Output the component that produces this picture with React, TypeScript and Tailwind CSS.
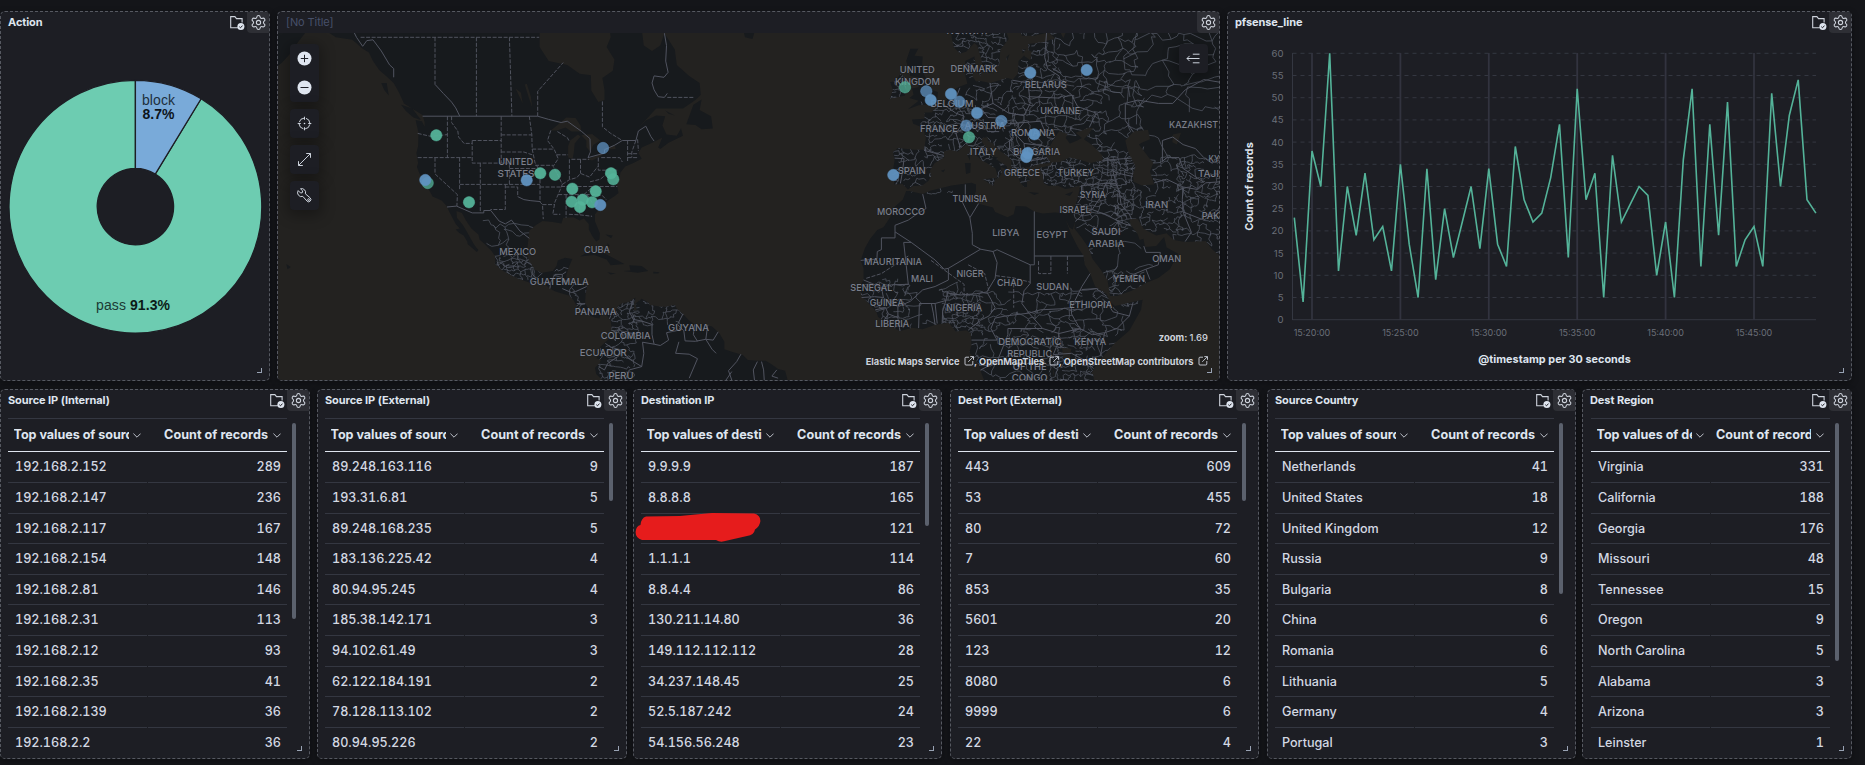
import { Settings } from "lucide-react";
import type { ReactNode } from "react";

/* ---------- shared panel chrome ---------- */

function FolderCheck() {
  return (
    <svg width="16" height="16" viewBox="0 0 16 16" fill="none" className="block">
      <path d="M9 12.8H1.7V1.6h4.2l1.6 2h5.6v3.8" stroke="#ced3dc" strokeWidth="1.1" />
      <circle cx="11.9" cy="11.6" r="3.5" fill="#dfe5ef" />
      <path d="M10.3 11.7l1.2 1.1 2-2.2" stroke="#1d1e24" strokeWidth="1" />
    </svg>
  );
}

function Panel({
  title,
  width,
  muted = false,
  folder = true,
  children,
}: {
  title: string;
  width: string;
  muted?: boolean;
  folder?: boolean;
  children: ReactNode;
}) {
  return (
    <section
      className={`relative flex h-[370px] shrink-0 flex-col rounded-[5px] border border-dashed border-[#565961] bg-[#1d1e24] shadow-[0_2px_6px_rgba(0,0,0,0.35)] ${width}`}
    >
      <header className="flex h-[21px] shrink-0 items-center justify-between">
        <h2
          className={
            muted
              ? "pl-2 text-[11px] leading-[21px] tracking-[-0.1px] text-[#47506a]"
              : "pl-[7px] text-[11px] leading-[21px] font-bold tracking-[-0.08px] text-[#dfe5ef]"
          }
        >
          {title}
        </h2>
        <div className="flex h-full items-center gap-[2.5px]">
          {folder && <FolderCheck />}
          <span className="flex h-[21px] w-[22px] items-center justify-center rounded-bl-[4px] rounded-tr-[4px] bg-[#2e2f35]">
            <Settings size={17} strokeWidth={1.5} color="#ced3dc" />
          </span>
        </div>
      </header>
      {children}
      <span className="absolute right-[7px] bottom-[7px] h-[5px] w-[5px] border-r-[1.5px] border-b-[1.5px] border-[#98a2b3]" />
    </section>
  );
}

/* ---------- donut ---------- */

const TAU = Math.PI * 2;

function slice(cx: number, cy: number, r0: number, r1: number, a0: number, a1: number) {
  const p = (r: number, a: number) =>
    `${(cx + r * Math.sin(a * TAU)).toFixed(2)} ${(cy - r * Math.cos(a * TAU)).toFixed(2)}`;
  const big = a1 - a0 > 0.5 ? 1 : 0;
  return `M${p(r0, a0)}L${p(r1, a0)}A${r1} ${r1} 0 ${big} 1 ${p(r1, a1)}L${p(r0, a1)}A${r0} ${r0} 0 ${big} 0 ${p(r0, a0)}Z`;
}

function Donut() {
  return (
    <svg viewBox="1 33 268 347" className="block h-[347px] w-[268px]" fontFamily='"Liberation Sans", Arial, sans-serif' fontSize="14">
      <path d={slice(135.4, 206.7, 38.2, 126.4, 0.087, 1)} fill="#6dccb1" stroke="#1d1e24" strokeWidth="1.3" />
      <path d={slice(135.4, 206.7, 38.2, 126.4, 0, 0.087)} fill="#79aad9" stroke="#1d1e24" strokeWidth="1.3" />
      <text x="158.5" y="105" textAnchor="middle" textLength="33" fill="#1d2f3c">block</text>
      <text x="158.5" y="119.3" textAnchor="middle" textLength="32" fontWeight="700" fill="#0d141b">8.7%</text>
      <text x="96" y="310" textLength="30" fill="#1b3a34">pass</text>
      <text x="130" y="310" textLength="40" fontWeight="700" fill="#0c1b18">91.3%</text>
    </svg>
  );
}

/* ---------- line chart ---------- */

const COUNTS = [
  23, 4, 38, 30, 60, 11, 30, 19, 33, 18, 21, 11, 35, 17, 5, 34, 9, 25, 14, 22, 30, 16, 34, 17, 12, 39, 27, 22, 24, 32,
  44, 14, 52, 27, 33, 5, 37, 22, 26, 30, 28, 10, 22, 5, 36, 52, 12, 44, 19, 49, 12, 18, 21, 12, 51, 30, 46, 54, 27, 24,
];
const TIMES = ["15:20:00", "15:25:00", "15:30:00", "15:35:00", "15:40:00", "15:45:00"];
const vy = (v: number) => 319.7 - v * 4.44;

function LineChart() {
  return (
    <svg viewBox="1228 33 623 347" className="block h-[347px] w-[623px]" fontFamily="Inter, sans-serif">
      {Array.from({ length: 13 }, (_, i) => i * 5).map((v) => (
        <g key={v}>
          <line x1="1292.5" x2="1816" y1={vy(v)} y2={vy(v)} stroke="#343741" strokeWidth="1" strokeDasharray={v ? "4 4" : undefined} />
          <text x="1283.5" y={vy(v) + 3.4} textAnchor="end" fontSize="9.6" fill="#6a6e78">{v}</text>
        </g>
      ))}
      <line x1="1292.5" x2="1292.5" y1="53" y2="320" stroke="#343741" />
      {TIMES.map((t, i) => (
        <g key={t}>
          <line x1={1312 + i * 88.4} x2={1312 + i * 88.4} y1="53" y2="320" stroke="#32333f" strokeWidth="1.8" />
          <text x={1312 + i * 88.4} y="336" textAnchor="middle" textLength="36.5" fontSize="9" fill="#6a6e78">{t}</text>
        </g>
      ))}
      <polyline
        points={COUNTS.map((v, i) => `${(1294.3 + i * 8.84).toFixed(1)},${vy(v).toFixed(1)}`).join(" ")}
        fill="none"
        stroke="#54b399"
        strokeWidth="1.6"
      />
      <text transform="translate(1253.3 186.5) rotate(-90)" textAnchor="middle" textLength="88.5" fontSize="10.8" fontWeight="700" fill="#dfe5ef">Count of records</text>
      <text x="1554.5" y="363" textAnchor="middle" textLength="152.5" fontSize="10.8" fontWeight="700" fill="#dfe5ef">@timestamp per 30 seconds</text>
    </svg>
  );
}

/* ---------- map ---------- */

type Pt = [number, number];

// Web Mercator at the current zoom level
const px = (lon: number) => 931 + lon * 4.133;
const py = (lat: number) => 349.2 - 236.8 * Math.log(Math.tan(Math.PI / 4 + (lat * Math.PI) / 360));

function geo(list: string, close = false) {
  return (
    list
      .trim()
      .split(/\s+/)
      .map((s, i) => {
        const [lon, lat] = s.split(",").map(Number);
        return `${i ? "L" : "M"}${px(lon).toFixed(1)} ${py(lat).toFixed(1)}`;
      })
      .join("") + (close ? "Z" : "")
  );
}

const LAND = [
  // the Americas
  `-147,62 -147,61 -144,60 -140,59.7 -137.5,58.6 -136,58.1 -135,57 -133.5,55.8 -131.5,54.8 -130,54 -128.7,52.6 -127.5,51 -125,50 -123,49.2 -122.5,48 -122.5,47.3 -123.2,48.2 -124.7,48.4 -124,46.3 -124.1,44 -124.5,42.8 -124.1,41 -124.4,40.3 -123.7,39 -122.5,37.8 -122.4,37 -121.9,36.6 -120.6,34.6 -119.2,34.1 -118.4,33.8 -117.2,32.7 -116.6,31.6 -115.8,30.3 -115,29 -114,28 -115,27.8 -114.2,27.1 -113.1,26.5 -112.2,25.2 -112.1,24.6 -110.5,23.4 -109.9,22.9 -109.5,23.3 -110.4,24.3 -111.3,25.7 -112.3,27.3 -113.3,28.8 -114.7,30.3 -114.8,31.7 -113.5,31.3 -112.5,29.7 -111.2,28 -109.5,26.7 -109.2,25.6 -107.8,24.5 -106.4,23.2 -105.5,22 -105.4,20.5 -105.6,20.3 -104.3,19.1 -102.2,17.9 -99.8,16.8 -96.5,15.7 -95,16.2 -93.5,15.6 -92.2,14.5 -91,13.9 -89.5,13.4 -87.6,12.9 -86.5,11.8 -85.8,10.5 -85.7,9.9 -84.8,9.8 -83.7,8.7 -82.8,8.2 -81.2,7.6 -80.2,7.4 -80,8.2 -79.5,8.9 -78.4,8.1 -77.5,6.8 -77.3,5.5 -77.4,4 -77.8,2.6 -79,1.5 -80,0.6 -80.4,-0.3 -80.9,-2.2 -79.9,-2.6 -80.2,-3.4 -81.3,-4.5 -81,-6 -79.8,-7.2 -79,-9 -34.5,-9 -34.8,-7 -35.3,-5.2 -37,-4.8 -38.5,-3.7 -40,-2.8 -42,-2.8 -44.3,-2.6 -45.5,-1.4 -48,-0.7 -50,0 -50,1.8 -51.3,4 -53,5.5 -55,6 -57.2,6 -58.6,7 -60,8.5 -61.5,9.8 -62,10.7 -64,10.2 -65.5,10.2 -68,10.6 -68.4,11.2 -70,12.1 -71.5,11 -71.2,9.3 -71.9,9.3 -71.8,11.2 -71.5,12.4 -73,11.4 -74.8,11 -75.6,10.5 -76.5,8.8 -77.3,8.6 -79,9.5 -80,9.2 -81.7,9 -83,9.9 -83.7,11 -83.6,13 -83.2,15 -84.5,15.8 -86,15.9 -88,15.7 -88.3,17.5 -87.6,19.5 -86.8,21.3 -88.5,21.6 -90.3,21 -90.6,19.8 -91.5,18.6 -94,18.2 -95.8,18.8 -97.2,20.8 -97.8,22.5 -97.5,25 -97.2,27.6 -95.5,28.8 -94,29.6 -91.5,29.4 -89.4,29.1 -89,30.3 -86.5,30.4 -85,29.7 -84,30.1 -82.8,29 -82.8,27.8 -81.8,26.2 -81,25.2 -80.2,25.7 -80.1,27 -81.3,29.5 -81.3,31 -79.5,32.8 -78,33.9 -76.5,34.7 -75.6,35.3 -76,37 -76.4,38.5 -75.3,38 -75.2,39.2 -74,40.4 -72,41 -70,41.8 -70.8,42.8 -70,43.8 -67.2,44.7 -65,45.5 -66,43.8 -65.5,43.5 -63.5,44.6 -60,45.8 -60.5,47 -61.5,45.8 -64,46 -65,47.5 -64.3,49 -66.5,49.1 -69,48.3 -71,47 -68.5,48.8 -66.5,50.2 -60,50.2 -57,51.5 -55.7,52.3 -56,54 -58.5,55 -61.5,56.5 -62,58.5 -64.5,60.5 -65.5,59 -67.5,58.3 -69.5,59 -70,61 -78,62 -77.5,60 -78.5,58.8 -76.6,57.2 -77,55.7 -79.5,54.7 -79,53 -79,51.5 -80.5,51.2 -82.2,52.9 -82.3,55.1 -85,55.3 -88,56.5 -92.5,57 -94.7,58.8 -94.7,60.5 -94,62`,
  `-160,62 -151.5,62 -151.5,60.5 -153.5,59.2 -155,58 -157,56.8 -160,55.5`,
  `-154.5,57.6 -152.5,58.3 -152.5,57.4 -154,56.8`,
  `-128.2,50.8 -125.5,50.2 -123.4,48.4 -125.2,48.8 -127,49.8`,
  `-133,54 -131.7,54 -131.2,52.2 -132.3,53`,
  `-59.2,47.7 -57.5,50.8 -55.5,51.6 -56,50 -53.2,49 -52.8,47 -55.5,46.9 -57,47.6`,
  `-64.3,49.9 -62,49.1 -63.5,49.4`,
  `-84.9,21.9 -82.5,23.1 -80,23 -77,21.6 -74.2,20.2 -77.5,19.9 -78.5,21.2 -81.5,22.2`,
  `-74.4,18.6 -72.7,18.7 -73,19.9 -70,19.7 -68.4,18.6 -71,18.2`,
  `-78.3,18.3 -76.3,18 -77.5,17.8`,
  `-67.2,18.4 -65.7,18.3 -66,18 -67.2,18`,
  `-78.4,24.9 -77.8,24.3 -78,23.8`,
  `-78.8,26.7 -77,26.5 -77.4,25.9`,
  `-156,20.2 -154.9,19.5 -155.7,19`,
  `-158,21.6 -157.6,21.3 -158.2,21.3`,
  `-46,62 -45,60 -43.2,59.8 -42.6,60.8 -42,62`,
  // Scandinavia
  `4.8,62 5,60 5.5,58.8 7,58 8.5,58.2 10.5,59.3 11.2,59 12,57.5 12.8,55.6 14.2,55.4 16.5,56.5 16.8,58.5 18.8,59.8 17.2,62`,
  // Eurasia and Africa
  `21.3,62 21.3,61 22,60.2 25,60.2 28.5,60.6 30,59.9 27,59.4 23.5,59.2 23.6,58.4 24.4,58.2 24,57.1 22.5,57.7 21.2,57 21,55.3 19.8,54.5 18.5,54.7 14.3,54 12,54.3 10.9,54.2 10,55 10.8,56.4 10.5,57.6 8.3,57 8.1,55.5 8.8,53.9 7,53.5 4.8,52.8 3.8,51.5 1.7,50.9 0.2,49.6 -1.5,49.6 -1.6,48.6 -4.6,48.5 -4.3,47.8 -2,47.2 -1.2,45.5 -1.7,43.4 -4,43.4 -8,43.7 -9.2,43 -8.8,41.5 -9.4,38.8 -8.8,38 -8.9,37 -6.9,37.1 -5.6,36 -4.4,36.7 -2.1,36.8 -0.6,37.7 0.1,38.7 -0.3,39.6 0.9,41 3.2,42 3.1,43.1 4.5,43.4 6.5,43.1 8.5,44.3 10.2,43.7 11,42.4 12.4,41.5 14,40.8 15.6,40 16.1,38.7 15.7,37.9 16.6,38.5 17.1,39.2 16.8,40.4 18.3,39.8 18.4,40.4 16,41.6 16,42 14,42.5 13.5,43.6 12.3,44.8 12.4,45.4 13.7,45.6 13.8,44.9 15,44.5 16,43.5 18.5,42.3 19.5,41.5 19.4,40.4 21,38.8 21.5,37.5 22.5,36.5 23.2,36.5 23.2,37.6 24,37.8 22.8,39.2 22.9,40.3 24,40.2 26,40.8 28.8,41 29,41.2 28,42 27.7,42.8 28.6,43.8 29.7,45.2 31,46.6 33,46.1 32.6,45.4 33.6,44.5 35.4,45 36.5,45.4 35,46.3 38,47.1 39.2,47.1 38,46 37,45.2 39,44.2 41.5,42.4 41.5,41.5 38.5,41 36,41.6 33.5,42 31.3,41.2 29.2,41.1 29,40.6 26.2,40.1 27,39 27.3,37.2 28.5,36.7 30.6,36.8 32.5,36.1 34,36.3 36,36.8 35.8,35.5 35,33 34.3,31.4 32.3,31.2 30,31.4 27,31.2 25,31.6 23,32.6 20.5,32.7 20,31 18.5,30.4 15.5,31.5 15,32.4 11.2,33.2 10.1,34 10.9,35.7 10.9,37 9.8,37.3 5,36.8 0,35.8 -2,35.1 -5.3,35.7 -6,35.7 -6.8,34 -9.5,32 -9.8,30.5 -11.5,28.3 -13,27.7 -14.7,25.8 -16,23.7 -17,21 -16.3,19.2 -16.3,16.5 -17.4,14.7 -16.7,12.5 -14.8,10.8 -13.2,9 -12.8,7.8 -11.3,6.7 -9,5.1 -7.5,4.4 -4.5,5.2 -2,4.8 1,5.9 4.3,6.4 6,4.3 8.5,4.6 9.6,3.9 9.8,1 9.3,-0.8 11.5,-3.5 12.2,-5.8 13.4,-8.8 39.5,-9 39.3,-6 38.8,-6 39.6,-4.3 41.5,-1.9 44.5,1.5 48,4.5 50.8,9.5 51.2,11.9 48.5,11.3 44.5,10.4 43.2,11.5 42.5,13.2 39.7,15 38.5,18 37.2,20 36.9,22 35.5,24 33.8,27 32.6,29.9 33.5,28.2 34.3,27.8 34.9,29.5 34.7,28 36.5,26 38,24 39.1,21.3 41,19 42.7,16.5 43.3,12.8 45,12.8 48.5,14 52,15.8 55,17 57.8,19 59.8,22.5 57,23.9 56.4,26.2 54.5,24.2 51.8,24 51.4,25.8 50.5,25.5 50,26.8 48.3,28.8 48,30 50,30 51.5,27.9 54.5,26.5 57,27 58.8,25.5 61.5,25.1 66.5,25.3 68,23.5 70,22 75,21 75,62`,
  `-5.6,50.1 -3,50.7 1.3,51 1.7,52.7 0.2,53 -1.5,55 -2.2,56 -2,57.6 -4,57.7 -3.1,58.6 -5,58.6 -6,57 -5,55 -3,54.8 -3,53.4 -4.6,53.2 -4.2,52.3 -5.2,51.8 -3,51.4`,
  `-10,51.7 -6.3,52.2 -5.6,54.5 -7.4,55.3 -8.5,54.3 -9.9,54.1 -9.2,53`,
  `12.5,38 15.6,38.2 15.1,36.7`,
  `8.2,41 9.6,41 9.5,39.2 8.5,39`,
  `8.7,42.5 9.4,43 9.4,41.5`,
  `23.6,35.5 26.2,35.3 25,34.9`,
  `32.4,35 34.4,35.6 33.6,34.7`,
  `18.2,57.5 19,57.9 18.4,57`,
  `11.1,55.6 12.5,56 12,54.9`,
  `22,58.5 23,58.5 22.2,58`,
  `2.4,39.6 3.4,39.8 3,39.3`,
].map((s) => geo(s, true)).join("");

const WATER = [
  `-92,46.7 -90,47.8 -88.3,48.8 -86,48.7 -84.8,47.5 -84.6,46.5 -87,46.5 -88.4,47.2 -90.5,46.7`,
  `-87.8,42 -87.8,44 -87.3,45 -85.4,46 -84.8,45.7 -86.2,44.5 -86.4,43 -86.7,41.8`,
  `-84.6,45.9 -82,46.1 -80,45 -81.7,44.2 -82.4,43 -83.4,43.9 -83.4,45`,
  `-83.3,41.7 -79,42.8 -80,42.2 -82,41.5`,
  `-79.7,43.4 -76.5,44.2 -76.3,43.5`,
  `-98.3,53.8 -97.3,51.8 -96.5,50.4 -96.8,52 -97.8,53.9`,
  `-100.5,53.2 -99.2,52.6 -98.8,51 -99.8,52.3`,
  `47,45 49,46.5 52.5,46.8 53,45.2 51,44.6 50.3,44.3 52.7,42 53.8,41 53,39.5 54,37 51,36.8 49,37.5 48.9,39 49.5,40.4 48,42.5 47.5,43.5`,
  `58.5,46 60.5,46.3 59.5,44.3 58.4,44.7`,
  `31.7,0.3 34,0.2 33.5,-2.3 32,-2.2`,
  `31,60.9 33,61 32,59.9`,
  `29.3,-3.5 30,-7 30.8,-8.5 29.6,-6`,
].map((s) => geo(s, true)).join("");

// national boundaries and coast-like province lines
const SOLID = [
  `-123,49 -95.15,49 -92.5,48.5 -89.5,48 -88,48.2 -84.5,46.5 -82.5,45.3 -82.4,43 -83,42 -79,42.8 -79,43.4 -76.5,44.2 -74.7,45 -71.4,45 -70.8,46.6 -69,47.4 -67.8,45.7 -67,44.9`,
  `-141,62 -139,60 -137.5,58.9 -136.5,59.6 -135,59.7 -133,58.3 -131,56.5 -130,56 -130,54.8`,
  `-120,53.8 -118,52.5 -116,51.2 -115,50.3 -114,49`,
  `-117.1,32.5 -114.8,32.7 -111,31.3 -108.2,31.3 -108.2,31.8 -106.5,31.8 -104.5,29.6 -103,29 -101.5,29.8 -99.5,27.5 -97.2,25.9`,
  `-100,34.6 -98.5,34 -97,33.8 -94.5,33.6`,
  `-64.5,60.5 -64,59 -64.2,57 -63.6,55.5 -64.6,54.8 -67,55 -67.5,54 -67,53 -66,52 -64.5,51.9 -63.8,52.5`,
  `-92.2,14.5 -92,16 -91,17.8 -89.2,17.8 -88.3,18.4`, `-89.2,17.8 -89.2,15.9`, `-89.2,14.5 -87,13.6 -86,13.8 -83.3,15`, `-85.7,11 -83.7,10.9`, `-82.9,9.6 -82.9,8.2`, `-77.3,8.6 -77.8,7.3`,
  `-72,12 -73,9 -72,7.2 -70,6.8 -67.5,6 -67.5,3.5 -67,1.2 -69.8,1.7 -69.5,-1 -70,-4.2 -72.8,-2.5 -75.3,-0.1 -77.5,0.5 -78.8,1.4`,
  `-75.3,-0.1 -75.5,-1.6 -78.2,-3.4 -79,-5 -80.4,-4.2`, `-67,1.2 -65.5,0.9 -63.5,2.2 -64,4 -61,4.6 -60.7,5.3 -61.3,6 -60,8.5`, `-60.7,5.3 -59.8,4.5 -59.5,2 -57,1.9 -54.5,2.4 -52.7,2.2 -51.5,4.2`, `-57.2,6 -57.5,3.5 -56.5,1.9`, `-54,5.9 -54.5,2.4`,
  `-70,-4.2 -73,-5 -74,-7.4`, `-61,1.8 -61.8,-1 -58.5,-1.2 -56.5,-2.3 -58.5,-7`, `-54.5,2.4 -53,0 -52,-1`, `-46,-1.2 -47,-3 -49,-5.2 -48,-8`, `-42,-3 -43,-5 -42.7,-7.5`, `-41,-3 -40.5,-5 -40.3,-8`, `-37.3,-5 -38.5,-6.5 -37,-7`, `-48.2,-5.4 -50,-8`,
  // Africa
  `25,31.6 25,22 25,20 24,20 24,15.7`, `25,22 36.9,22`, `24,20 16,23.4 15,23 12,23.5 10,24.5 10,27 9.4,30.3 11.5,33.2`, `9.4,30.3 7.6,33.5 8.3,35 8.3,37`,
  `-2,35.1 -1.2,32.2 -3.5,31 -5.5,29.8 -8.7,28.7 -8.7,27.3 -4.8,25 1,21.1 3.2,19 4.2,19.2 12,23.5`, `-8.7,27.3 -8.7,26 -12,26 -12,23.4 -13,23 -13.1,21.3 -17,21`,
  `-6.6,25 -5.5,15.5 -9.5,15.4 -12,14.8 -16.3,16.5`, `-4.8,25 -6.6,25`, `4.2,19.2 4.2,16.5 1,15 -2,14.2 -5,11.5 -8,10.2 -11.5,12.3 -12,14.8`, `3.6,11.7 4,13.5 7,13 11,13.3 13.5,13.7 15.5,16.9 16,20.5 15,23`, `13.5,13.7 14.5,12 15.5,10 14,8 12,7 9,4.6`,
  `24,15.7 22.5,14 22,11 23.7,8.7 18,8 15.5,7.5 14.5,5 16,2.2 9.8,2.2`, `23.7,8.7 26.5,9.5 31,9.7 34,10 34,8.5 36,5 31,3.8 27,5 18.6,5 18.6,3.5 16,-3 12,-5`, `27,5 23.7,8.7`, `34,10 36.5,15 38.5,18`, `36.5,14.3 40,14.5 42.5,12.7`, `41.5,12 42.8,11 43.2,11.5`, `42.8,11 44,9 48,8 45,5 42,4 39,3.5 36,5`, `42,4 41,-1.7`, `31,3.8 30.5,1 29.6,-1.3 34,-1 37.7,-3 39.3,-4.7`, `48,8 48.9,11.3`, `36,5 34,4`,
  `3.6,11.7 2.8,9 2.7,6.4`, `1,11 1.5,6.2`, `0.1,11 0.6,8.5 1,5.9`, `-2.8,11 -3,5.1`, `-2.8,11 1,11 3.6,11.7`, `-8,10.2 -8,7.5 -7.5,4.4`, `-13.5,9.5 -11,10 -10.3,8.5 -11.4,6.9`, `-10.3,8.5 -8,7.6`, `-13.7,12.6 -16.8,12.4`, `-13.7,12.6 -11.4,12.4`,
  // Middle East and Asia
  `35.5,33.3 36.5,34.5 36.4,36.8 42.3,37.2 44.8,37.2 45.5,35.8 46,33 48,31 48.5,30`, `36,32.5 39,32 41,34.5 42.3,37.2`, `39,32 42,31 46.5,29.1 48.3,28.6`, `34.9,29.5 37.5,31.5 39,32`, `42.8,16.5 44,17.3 47,17 52,19 55,20 55.5,22.8 52,22.8 51.5,24.2`, `52,19 53,16.6`, `44.8,37.2 44,39.5 46,39 48.8,38.5`, `41.5,41.5 46.5,41.8 48.5,41.9`, `43.5,41 45,39.8`,
  `54,37.3 57,38 61,36.5 60.8,34 61,31.5 63,27.2 61.5,25.2`, `61,36.5 64.5,36 66.5,37.3 70,37.5`, `61,31.5 66,29.8 69.3,31.8 71,34`, `56,41.3 56,45 58.5,45.6 61,44.3 64,43.6 66,42 68,41 71,42`, `56,41.3 57,42 60,42 61,40 66,37.4`, `47,51 50,51.5 55,51 58.5,51 61.5,53 66,54.5 71,54`, `47,51 47,48.3 49,46.4`,
  // Europe
  `28,60.8 27.5,57.5 28.2,56 31,55 31.5,53.5 34,52.3 35.5,50.5 40,49.5 38.3,47.2`, `23.6,52 31,51.8 31.8,52.1`, `14.3,53.9 15,51 18.8,49.5 22.5,49.1 24,51 23.5,54 19.7,54.4`, `22.5,49.1 22.5,48 26.5,48.2 28.2,45.5 29.7,45.3`, `22.5,48 20.3,46.2 22.5,44.5 27,44.1 28.6,43.7`, `3,42.4 -1.7,43.3`, `-8.8,41.9 -6.5,41.8 -7,39 -7.4,37.2`, `2.6,51 6,49.5 8,49 7.5,47.6 6,46.3 7,44 7.5,43.8`, `6.1,50 6,51.8 7,53.3`, `15,51 12.2,50.2 13.8,48.8 17,48.7 18.8,47.8 22.5,48`, `7.5,47.6 10,47.5 13,47.6 13.7,46.5 16.5,46.5`, `20.3,46.2 19,44.9 19,43.4 21,42 23,41.3 26.3,41.7 28,42`, `22.5,44.5 23,41.3`,
].map((s) => geo(s)).join("");

const STATES = [
  `-138,60 -94.8,60`, `-120,60 -120,53.8`, `-110,60 -110,49`, `-102,60 -101.4,49`, `-95.15,49 -95.15,52.8 -89,56.8`, `-79.5,51.3 -79.5,47.3 -77.5,46.2 -74.7,45`, `-63.8,51.9 -57.2,51.9`,
  `-117,49 -117,42`, `-124.2,46.2 -121,45.7 -117,46`, `-124.2,42 -111,42`, `-120,42 -120,39 -114.6,35 -114.7,32.7`, `-114.05,42 -114.05,35.8`, `-114,37 -94.6,37`, `-109.05,41 -109.05,31.3`, `-111,45 -104,45`, `-111,45 -111,41 -102,41 -102,37`,
  `-116,49 -116,48 -114.5,46.6 -114.3,45.6 -113,44.5 -111,44.5`, `-104,49 -104,41`, `-104,45.95 -96.5,45.95`, `-104,43 -98.5,43 -96.5,42.5`, `-97.2,49 -96.6,46 -96.5,43.5 -95.8,41 -95,40`, `-96.5,43.5 -91.2,43.5`, `-102,40 -95.3,40`, `-103,37 -103,32 -106.6,32`, `-103,36.5 -100,36.5 -100,34.6`, `-95.8,40.6 -91.4,40.6`, `-94.6,39 -94.6,33.5 -94,33 -93.8,30`, `-94.6,36.5 -89.5,36.5`, `-94,33 -91,33`,
  `-92,46.7 -92.8,45 -91.2,43.5 -90.2,41.8 -91.4,40.4 -90.2,38.7 -89.2,37 -89.7,36 -91,33.5 -91.5,31 -89.7,31`, `-90.6,42.5 -87.8,42.5`, `-87.5,41.7 -87.5,38`, `-84.8,41.7 -84.8,39.1`, `-87,41.7 -82.7,41.7`, `-89.2,37 -87.5,37.9 -85.7,38.3 -84.8,39.1 -82.6,38.4 -80.6,40.4`, `-80.5,42 -80.5,39.7 -75.6,39.7`, `-79.8,42 -75.3,42 -74.7,41.2`, `-89.5,36.6 -81.7,36.6 -75.9,36.6`, `-90.2,35 -83,35 -81,35 -79.5,34.8 -78.5,33.9`, `-88.3,35 -88.3,30.3`, `-85.4,35 -85,32 -85,31`, `-87.6,31 -85,30.9 -82,30.6`, `-83.2,35 -81,32.1`, `-82.5,37.5 -80,38 -78,39.3`, `-84,35 -81.7,36.6`, `-73.4,45 -73.4,41.2`, `-71.4,45 -72.4,43 -72.4,42`, `-73.4,42 -71,42`, `-73.4,42.7 -71,42.7`, `-71,45.2 -70.8,43.2`, `-90.4,46.5 -88,45.5 -87.6,45`,
  // interior lines of larger African states
  `-5.5,22 -12,18 -16,16.8`, `0,21 8,15.5 8,13.2`, `15.7,17.5 20,17 24,16`, `29,22 29,18 26,18 26,21`, `33,22 33,18`, `20,17 20,10`, `9,20 13,18 14,14`,
].map((s) => geo(s)).join("");

// Small administrative cells: jittered honeycomb, clipped to the coastline
const ZONES: { box: [number, number, number, number]; cell: number; keep: number }[] = [
  { box: [-108, 29, -98, 22], cell: 12, keep: 0.75 },
  { box: [-104.5, 22, -96, 16], cell: 4.5, keep: 0.72 },
  { box: [-96, 19, -83, 8], cell: 9, keep: 0.45 },
  { box: [-77, 11.5, -72, 4], cell: 5, keep: 0.8 },
  { box: [-72, 11.5, -61, 7], cell: 7, keep: 0.7 },
  { box: [-80, 4, -72, -7], cell: 7, keep: 0.7 },
  { box: [-10, 44, 4, 36], cell: 7, keep: 0.6 },
  { box: [-10, 56, -6, 51], cell: 5, keep: 0.6 },
  { box: [-2, 51, 9, 43], cell: 6.5, keep: 0.72 },
  { box: [5, 61, 18, 55], cell: 6, keep: 0.7 },
  { box: [9, 55, 20, 44], cell: 7, keep: 0.62 },
  { box: [20, 61, 30, 54], cell: 6.5, keep: 0.65 },
  { box: [20, 54, 40, 44], cell: 8.5, keep: 0.7 },
  { box: [30, 62, 48, 54], cell: 13, keep: 0.85 },
  { box: [40, 54, 48, 41], cell: 11, keep: 0.8 },
  { box: [48, 62, 72, 52], cell: 20, keep: 0.85 },
  { box: [50, 52, 72, 42], cell: 26, keep: 0.45 },
  { box: [11, 44, 26, 37], cell: 5.5, keep: 0.7 },
  { box: [26, 42, 44, 36.5], cell: 4.6, keep: 0.75 },
  { box: [35, 36.5, 47, 30], cell: 8, keep: 0.7 },
  { box: [44, 42, 60, 28], cell: 7, keep: 0.65 },
  { box: [60, 42, 72, 30], cell: 6, keep: 0.75 },
  { box: [60, 30, 72, 24], cell: 10, keep: 0.7 },
  { box: [36, 30, 57, 18], cell: 20, keep: 0.5 },
  { box: [42, 18, 50, 12], cell: 8, keep: 0.6 },
  { box: [-17, 17, -6, 5], cell: 7, keep: 0.6 },
  { box: [-6, 15, 3, 5], cell: 12, keep: 0.45 },
  { box: [3, 13.5, 12, 4], cell: 4.8, keep: 0.78 },
  { box: [12, 13, 34, 1], cell: 9, keep: 0.68 },
  { box: [9, 1, 30, -8], cell: 12, keep: 0.65 },
  { box: [29, 3, 38, -8], cell: 6, keep: 0.65 },
  { box: [34, 14, 46, 4], cell: 11, keep: 0.7 },
  { box: [38, 4, 46, -4], cell: 12, keep: 0.5 },
];

function cells() {
  let seed = 7919;
  const rnd = () => {
    seed = (seed * 1103515245 + 12345) % 2147483648;
    return seed / 2147483648;
  };
  let d = "";
  for (const { box, cell, keep } of ZONES) {
    const x0 = px(box[0]);
    const y0 = py(box[1]);
    const cols = Math.ceil((px(box[2]) - x0) / cell);
    const rows = Math.ceil((py(box[3]) - y0) / (cell * 0.8));
    const pts: Pt[][] = [];
    for (let r = 0; r <= rows; r++) {
      pts.push([]);
      for (let c = 0; c <= cols; c++) {
        pts[r].push([x0 + c * cell + (rnd() - 0.5) * cell * 0.75, y0 + r * cell * 0.8 + (rnd() - 0.5) * cell * 0.85]);
      }
    }
    const edge = (a: Pt, b: Pt) => {
      if (rnd() > keep) return;
      const w = cell * 0.42;
      const at = (t: number) =>
        `L${(a[0] + (b[0] - a[0]) * t + (rnd() - 0.5) * w).toFixed(1)} ${(a[1] + (b[1] - a[1]) * t + (rnd() - 0.5) * w).toFixed(1)}`;
      d += `M${a[0].toFixed(1)} ${a[1].toFixed(1)}${at(0.33)}${at(0.66)}L${b[0].toFixed(1)} ${b[1].toFixed(1)}`;
    };
    for (let r = 0; r <= rows; r++) {
      for (let c = 0; c <= cols; c++) {
        if (c < cols) edge(pts[r][c], pts[r][c + 1]);
        if (r < rows && ((r + c) % 2 === 0 || rnd() < 0.45)) edge(pts[r][c], pts[r + 1][c]);
      }
    }
  }
  return d;
}
const CELLS = cells();

const LABELS: [string, number, number, number][] = [
  ["UNITED", 515.7, 161.7, 35], ["STATES", 516, 173.5, 37], ["MEXICO", 517.7, 251.3, 37], ["CUBA", 597, 249.5, 26],
  ["GUATEMALA", 559.3, 281.8, 59], ["PANAMA", 595.7, 311.8, 42], ["COLOMBIA", 625.7, 335.4, 50], ["ECUADOR", 603.3, 352.7, 47],
  ["PERU", 621, 375.7, 25], ["GUYANA", 688.6, 327.3, 41], ["UNITED", 917.3, 69.8, 35], ["KINGDOM", 917.5, 81.7, 45],
  ["NORWAY", 968, 30.5, 43], ["DENMARK", 974, 68.8, 47], ["BELARUS", 1045.7, 84.7, 42], ["BELGIUM", 952, 103.7, 43],
  ["UKRAINE", 1060.3, 110.8, 40], ["FRANCE", 939, 128.7, 38], ["AUSTRIA", 985, 125.2, 41], ["ROMANIA", 1033, 132.6, 44],
  ["ITALY", 983.3, 151.9, 27], ["BULGARIA", 1036.7, 151.9, 47], ["GREECE", 1022, 172, 36], ["TURKEY", 1075.7, 172, 37],
  ["SPAIN", 911.7, 170, 28], ["KAZAKHST", 1193.5, 124.8, 49], ["KY", 1214, 158, 11], ["TAJI", 1208.5, 173.8, 21],
  ["PAK", 1210.7, 215.7, 18], ["SYRIA", 1092.7, 194.4, 26], ["IRAN", 1156.7, 204.4, 23], ["ISRAEL", 1075, 209.8, 31],
  ["TUNISIA", 970, 198.4, 35], ["MOROCCO", 901, 211.4, 48], ["LIBYA", 1005.7, 232.3, 27], ["EGYPT", 1052, 234.5, 31],
  ["SAUDI", 1106, 231.6, 29], ["ARABIA", 1106.3, 243.4, 36], ["OMAN", 1166.7, 258.4, 29], ["MAURITANIA", 893, 261.8, 58],
  ["MALI", 922, 278.6, 22], ["NIGER", 970, 273, 27], ["CHAD", 1010, 282, 26], ["SUDAN", 1052.7, 286.5, 33],
  ["YEMEN", 1129, 278.8, 32], ["SENEGAL", 871.3, 287, 42], ["GUINEA", 886.7, 302.8, 34], ["NIGERIA", 964, 307.4, 36],
  ["ETHIOPIA", 1090.7, 304.8, 43], ["LIBERIA", 892.3, 323.8, 34], ["DEMOCRATIC", 1029.7, 341.8, 63], ["REPUBLIC", 1029.7, 353.6, 45],
  ["OF THE", 1029.7, 366, 34], ["CONGO", 1029.7, 377.3, 36], ["KENYA", 1090.3, 341.6, 32],
];

const GREEN = "#54b399";
const BLUE = "#6092c0";
const DOTS: [number, number, string, number][] = [
  [436.3, 135.3, GREEN, 0.95], [427.7, 183, GREEN, 0.75], [425.3, 180, BLUE, 0.95], [469, 202.3, GREEN, 0.95],
  [540.3, 173.3, GREEN, 0.95], [555, 174.7, GREEN, 0.88], [526.7, 180.3, BLUE, 0.95], [603, 148, BLUE, 0.75],
  [613.3, 179.3, GREEN, 0.88], [611, 173.3, GREEN, 0.95], [572.3, 188.7, GREEN, 0.95], [571.7, 201.7, GREEN, 0.92],
  [595.7, 191.3, GREEN, 0.95], [582.7, 199.7, GREEN, 0.92], [592, 202.3, GREEN, 0.92], [580, 207, GREEN, 0.95],
  [600.3, 205, BLUE, 0.95], [905, 87.3, GREEN, 0.75], [926.3, 91.3, BLUE, 0.75], [930.7, 100, BLUE, 0.95],
  [959.3, 101.7, BLUE, 0.75], [951, 94, BLUE, 0.95], [977, 113, BLUE, 0.95], [966.3, 125.7, BLUE, 0.75],
  [969, 137.3, GREEN, 0.8], [1001.3, 121, BLUE, 0.78], [1030.3, 72.7, BLUE, 0.95], [1086.7, 70, BLUE, 0.95],
  [1034.3, 134.3, BLUE, 0.95], [1027.7, 153, BLUE, 0.95], [1026.3, 157, BLUE, 0.95], [893.3, 175, BLUE, 0.95],
];

function WorldMap() {
  return (
    <svg viewBox="278 33 941 347" className="block h-[347px] w-[941px] rounded-b-[4px]">
      <defs>
        <clipPath id="land">
          <path d={LAND} />
        </clipPath>
      </defs>
      <rect x="278" y="33" width="941" height="347" fill="#232220" />
      <path d={LAND} fill="#171a1d" />
      <g clipPath="url(#land)" fill="none" strokeLinejoin="round">
        <path d={CELLS} stroke="#555966" strokeWidth="0.8" opacity="0.9" />
      </g>
      <path d={WATER} fill="#232220" />
      <g fill="none" strokeLinejoin="round">
        <path d={STATES} stroke="#50535e" strokeWidth="1" strokeDasharray="4 1.5" />
        <path d={SOLID} stroke="#515460" strokeWidth="1" />
      </g>
      <g fontFamily="Inter, sans-serif" fontSize="9.6" fontWeight="500" fill="#7b7f8b" stroke="#171a1d" strokeWidth="1.2" strokeOpacity="0.5" paintOrder="stroke">
        {LABELS.map(([t, x, y, w]) => (
          <text key={t + x} x={x} y={y + 3.5} textAnchor="middle" textLength={w} lengthAdjust="spacingAndGlyphs">{t}</text>
        ))}
      </g>
      {DOTS.map(([x, y, fill, o]) => (
        <circle key={`${x}-${y}`} cx={x} cy={y} r="5.7" fill={fill} fillOpacity={o} stroke={fill} strokeOpacity="0.6" strokeWidth="0.8" />
      ))}
    </svg>
  );
}

function ControlGroup({ children }: { children: ReactNode }) {
  return (
    <div className="flex w-[29px] flex-col rounded-[4px] bg-[#1d1e24] shadow-[0_3px_14px_3px_rgba(0,0,0,0.3)]">{children}</div>
  );
}

function Control({ children }: { children: ReactNode }) {
  return (
    <button className="flex h-[29px] w-[29px] items-center justify-center">
      <svg width="15" height="15" viewBox="0 0 15 15" fill="none" stroke="#dfe5ef" strokeWidth="0.9">
        {children}
      </svg>
    </button>
  );
}

function External() {
  return (
    <svg width="10" height="10" viewBox="0 0 10 10" fill="none" stroke="#ced3dc" strokeWidth="0.9" className="ml-[4.5px] block">
      <path d="M5 1.2H2a1 1 0 0 0-1 1V8a1 1 0 0 0 1 1h5.8a1 1 0 0 0 1-1V5" />
      <path d="M6.3.6h3.2v3.2M9.4.7 4.3 5.8" />
    </svg>
  );
}

function MapBody() {
  return (
    <div className="relative h-[347px] overflow-hidden">
      <WorldMap />
      <div className="absolute top-[11px] left-[11.5px] flex flex-col gap-[7px]">
        <ControlGroup>
          <Control>
            <circle cx="7.5" cy="7.5" r="7" fill="#dfe5ef" stroke="none" />
            <path d="M7.5 3.8v7.4M3.8 7.5h7.4" stroke="#1d1e24" strokeWidth="1" />
          </Control>
          <Control>
            <circle cx="7.5" cy="7.5" r="7" fill="#dfe5ef" stroke="none" />
            <path d="M3.5 7.5h8" stroke="#1d1e24" strokeWidth="1" />
          </Control>
        </ControlGroup>
        <ControlGroup>
          <Control>
            <circle cx="7.5" cy="7.5" r="5.4" strokeDasharray="6.6 1.88" strokeDashoffset="-0.94" />
            <path d="M7.5.7v3.1M7.5 11.2v3.1M.7 7.5h3.1M11.2 7.5h3.1" />
            <circle cx="7.5" cy="7.5" r="0.8" fill="#dfe5ef" stroke="none" />
          </Control>
        </ControlGroup>
        <ControlGroup>
          <Control>
            <path d="M9.2 1.5h4.3v4.3M13.3 1.7 1.7 13.3M1.5 9.2v4.3h4.3" />
          </Control>
        </ControlGroup>
        <ControlGroup>
          <Control>
            <path d="M1.2 2.6 3.6 5l1.7-.3.4-1.8L3.5.8a3.9 3.9 0 0 1 4.9 5l4.8 4.1a2.2 2.2 0 0 1-3.2 3.2L5.8 8.4A3.9 3.9 0 0 1 1.2 2.6Z" strokeLinejoin="round" />
            <circle cx="11.6" cy="11.6" r="0.9" />
          </Control>
        </ControlGroup>
      </div>
      <div className="absolute top-[11px] right-[11px]">
        <ControlGroup>
          <Control>
            <path d="M6.8 3.2h6.7M1 7.5h12.5M6.8 11.8h6.7M3.6 4.9 1 7.5l2.6 2.6" />
          </Control>
        </ControlGroup>
      </div>
      <div className="absolute right-[11px] bottom-[36px] text-[9.45px] leading-[12px] font-bold text-[#ced3dc]">
        zoom: <span className="font-medium">1.69</span>
      </div>
      <div className="absolute right-[11px] bottom-[12.5px] flex items-center text-[9.25px] leading-[13px] font-bold whitespace-pre text-[#ced3dc]">
        Elastic Maps Service
        <External />, OpenMapTiles
        <External />, OpenStreetMap contributors
        <External />
      </div>
    </div>
  );
}

/* ---------- tables ---------- */

type TableSpec = {
  title: string;
  panel: string;
  pad: string;
  table: string;
  thumb: string;
  first: string;
  redact?: boolean;
  rows: [string, number][];
};

const TABLES: TableSpec[] = [
  {
    title: "Source IP (Internal)", panel: "w-[310px]", pad: "pl-[7px]", table: "w-[279px]", thumb: "h-[196px]", first: "Top values of source.ip",
    rows: [["192.168.2.152", 289], ["192.168.2.147", 236], ["192.168.2.117", 167], ["192.168.2.154", 148], ["192.168.2.81", 146], ["192.168.2.31", 113], ["192.168.2.12", 93], ["192.168.2.35", 41], ["192.168.2.139", 36], ["192.168.2.2", 36]],
  },
  {
    title: "Source IP (External)", panel: "ml-[7px] w-[310px]", pad: "pl-[7px]", table: "w-[279px]", thumb: "h-[78px]", first: "Top values of source.ip",
    rows: [["89.248.163.116", 9], ["193.31.6.81", 5], ["89.248.168.235", 5], ["183.136.225.42", 4], ["80.94.95.245", 4], ["185.38.142.171", 3], ["94.102.61.49", 3], ["62.122.184.191", 2], ["78.128.113.102", 2], ["80.94.95.226", 2]],
  },
  {
    title: "Destination IP", panel: "ml-[6px] w-[309px]", pad: "pl-[7px]", table: "w-[279px]", thumb: "h-[103px]", first: "Top values of destination.ip", redact: true,
    rows: [["9.9.9.9", 187], ["8.8.8.8", 165], ["", 121], ["1.1.1.1", 114], ["8.8.4.4", 86], ["130.211.14.80", 36], ["149.112.112.112", 28], ["34.237.148.45", 25], ["52.5.187.242", 24], ["54.156.56.248", 23]],
  },
  {
    title: "Dest Port (External)", panel: "ml-[8px] w-[309px]", pad: "pl-[7px]", table: "w-[279px]", thumb: "h-[78px]", first: "Top values of destination.port",
    rows: [["443", 609], ["53", 455], ["80", 72], ["7", 60], ["853", 35], ["5601", 20], ["123", 12], ["8080", 6], ["9999", 6], ["22", 4]],
  },
  {
    title: "Source Country", panel: "ml-[8px] w-[309px]", pad: "pl-[7px]", table: "w-[279px]", thumb: "h-[171px]", first: "Top values of source.geo",
    rows: [["Netherlands", 41], ["United States", 18], ["United Kingdom", 12], ["Russia", 9], ["Bulgaria", 8], ["China", 6], ["Romania", 6], ["Lithuania", 5], ["Germany", 4], ["Portugal", 3]],
  },
  {
    title: "Dest Region", panel: "ml-[6px] w-[270px]", pad: "pl-[8px]", table: "w-[239px]", thumb: "h-[238px]", first: "Top values of destination.geo",
    rows: [["Virginia", 331], ["California", 188], ["Georgia", 176], ["Missouri", 48], ["Tennessee", 15], ["Oregon", 9], ["North Carolina", 5], ["Alabama", 3], ["Arizona", 3], ["Leinster", 1]],
  },
];

// a 30.6px pitch, rounded to whole pixels
const ROW_H = ["h-[31px]", "h-[31px]", "h-[30px]", "h-[31px]", "h-[30px]", "h-[31px]", "h-[31px]", "h-[30px]", "h-[31px]", "h-[30px]"];

function Chevron() {
  return (
    <svg width="8" height="5" viewBox="0 0 8 5" fill="none" stroke="#ced3dc" strokeWidth="0.9" className="shrink-0">
      <path d="M.4.6 4 4.2 7.6.6" />
    </svg>
  );
}

function HeadCell({ label, right = false }: { label: string; right?: boolean }) {
  return (
    <div className="flex w-1/2 items-center gap-[4.5px] pr-[6.5px] pl-[5.5px]">
      <div className={`flex flex-1 overflow-hidden text-[12.6px] leading-[18px] font-bold whitespace-nowrap text-[#dfe5ef] ${right ? "justify-end tracking-[0.04px]" : "tracking-[-0.04px]"}`}>
        <span className={right ? "min-w-0 overflow-hidden" : ""}>{label}</span>
      </div>
      <Chevron />
    </div>
  );
}

function TablePanel({ t }: { t: TableSpec }) {
  return (
    <Panel title={t.title} width={t.panel}>
      <div className={`flex items-start gap-[5px] pt-[7px] ${t.pad}`}>
        <div className={`shrink-0 border-t border-[#343741] ${t.table}`}>
          <div className="flex h-[33px] border-b border-[#dfe5ef]">
            <HeadCell label={t.first} />
            <HeadCell label="Count of records" right />
          </div>
          {t.rows.map(([name, count], i) => (
            <div key={i} className={`flex gap-px text-[12.6px] font-medium text-[#d3d8e2] tabular-nums ${ROW_H[i]}`}>
              <div className={`flex w-1/2 items-center pt-px pl-[7px] whitespace-nowrap ${i < 9 ? "border-b border-[#343741]" : ""}`}>{name}</div>
              <div className={`flex w-1/2 items-center justify-end pt-px pr-[6px] ${i < 9 ? "border-b border-[#343741]" : ""}`}>{count}</div>
            </div>
          ))}
        </div>
        <div className={`mt-[5px] w-[4px] rounded-full bg-[#5b616d] ${t.thumb}`} />
      </div>
      {t.redact && (
        <svg className="absolute top-[121px] left-0 h-[36px] w-[130px]" viewBox="634 511 130 36">
          <path
            d="M646 516.5 L680 516 Q695 514.5 712 513 L754 513.5 Q760.5 515 760.4 521 Q760 526 755 529.5 Q754 535 747 536 L724 541.3 Q720 542.5 716 540 L642 540 Q635.5 538 635.6 532 Q636 526 640.5 525 Q641 518 646 516.5Z"
            fill="#e61c1c"
          />
        </svg>
      )}
    </Panel>
  );
}

export default function App() {
  return (
    <main
      className="flex h-[765px] w-[1865px] flex-col gap-[8px] overflow-hidden bg-[#141519] pt-[11px]"
      style={{ fontFamily: 'Inter, "Liberation Sans", sans-serif' }}
    >
      <div className="flex">
        <Panel title="Action" width="w-[270px]">
          <Donut />
        </Panel>
        <Panel title="[No Title]" width="ml-[7px] w-[943px]" muted folder={false}>
          <MapBody />
        </Panel>
        <Panel title="pfsense_line" width="ml-[7px] w-[625px]">
          <LineChart />
        </Panel>
      </div>
      <div className="flex">
        {TABLES.map((t) => (
          <TablePanel key={t.title} t={t} />
        ))}
      </div>
    </main>
  );
}
